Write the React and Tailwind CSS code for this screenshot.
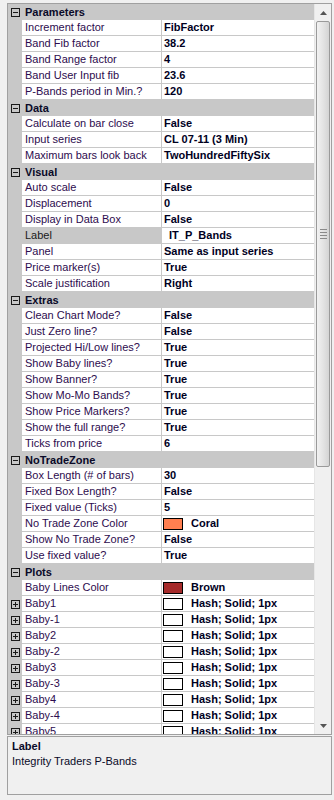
import React from "react";

const sections = [
  {
    title: "Parameters",
    rows: [
      { label: "Increment factor", value: "FibFactor" },
      { label: "Band Fib factor", value: "38.2" },
      { label: "Band Range factor", value: "4" },
      { label: "Band User Input fib", value: "23.6" },
      { label: "P-Bands period in Min.?", value: "120" },
    ],
  },
  {
    title: "Data",
    rows: [
      { label: "Calculate on bar close", value: "False" },
      { label: "Input series", value: "CL 07-11 (3 Min)" },
      { label: "Maximum bars look back", value: "TwoHundredFiftySix" },
    ],
  },
  {
    title: "Visual",
    rows: [
      { label: "Auto scale", value: "False" },
      { label: "Displacement", value: "0" },
      { label: "Display in Data Box", value: "False" },
      { label: "Label", value: "IT_P_Bands", selected: true },
      { label: "Panel", value: "Same as input series" },
      { label: "Price marker(s)", value: "True" },
      { label: "Scale justification", value: "Right" },
    ],
  },
  {
    title: "Extras",
    rows: [
      { label: "Clean Chart Mode?", value: "False" },
      { label: "Just Zero line?", value: "False" },
      { label: "Projected Hi/Low lines?", value: "True" },
      { label: "Show Baby lines?", value: "True" },
      { label: "Show Banner?", value: "True" },
      { label: "Show Mo-Mo Bands?", value: "True" },
      { label: "Show Price Markers?", value: "True" },
      { label: "Show the full range?", value: "True" },
      { label: "Ticks from price", value: "6" },
    ],
  },
  {
    title: "NoTradeZone",
    rows: [
      { label: "Box Length (# of bars)", value: "30" },
      { label: "Fixed Box Length?", value: "False" },
      { label: "Fixed value (Ticks)", value: "5" },
      { label: "No Trade Zone Color", value: "Coral", swatch: "#ff7f50" },
      { label: "Show No Trade Zone?", value: "False" },
      { label: "Use fixed value?", value: "True" },
    ],
  },
  {
    title: "Plots",
    rows: [
      { label: "Baby Lines Color", value: "Brown", swatch: "#a52a2a" },
      ...["Baby1", "Baby-1", "Baby2", "Baby-2", "Baby3", "Baby-3", "Baby4", "Baby-4", "Baby5"].map((b) => ({
        label: b,
        value: "Hash; Solid; 1px",
        swatch: "#ffffff",
        expand: true,
      })),
    ],
  },
];

// small +/- box drawn in the gutter
function ExpandBox({ minus }) {
  return (
    <svg width="9" height="9" viewBox="0 0 9 9" className="block">
      <rect x="0.5" y="0.5" width="8" height="8" fill="none" stroke="#1a1a1a" />
      <line x1="2" y1="4.5" x2="7" y2="4.5" stroke="#1a1a1a" />
      {!minus && <line x1="4.5" y1="2" x2="4.5" y2="7" stroke="#1a1a1a" />}
    </svg>
  );
}

function Header({ title }) {
  return (
    <div className="flex h-4 bg-[#c8c8c8] shrink-0">
      <div className="w-[14px] flex items-center justify-center">
        <ExpandBox minus />
      </div>
      <div className="pl-[3px] font-bold text-[#0a0a28] leading-4">{title}</div>
    </div>
  );
}

function Row({ label, value, swatch, expand, selected }) {
  return (
    <div className="flex h-4 shrink-0">
      <div className="w-[14px] bg-[#c8c8c8] flex items-center justify-center">
        {expand && <ExpandBox />}
      </div>
      <div
        className={`w-[140px] border-r border-b border-[#c8c8c8] pl-[3px] leading-[15px] whitespace-nowrap overflow-hidden ${
          selected ? "bg-[#c8c8c8] text-[#1a1a1a]" : "bg-white text-[#2d0c4e]"
        }`}
      >
        {label}
      </div>
      <div className="flex-1 flex items-center bg-white border-b border-[#c8c8c8] whitespace-nowrap overflow-hidden font-bold text-[#00001e]">
        {swatch ? (
          <>
            <span
              className="ml-px w-[20px] h-[12px] border border-black shrink-0"
              style={{ backgroundColor: swatch }}
            />
            <span className="pl-[8px] leading-[15px]">{value}</span>
          </>
        ) : (
          <span className={`${selected ? "pl-[7px]" : "pl-[2px]"} leading-[15px]`}>{value}</span>
        )}
      </div>
    </div>
  );
}

function Arrow({ up }) {
  return (
    <svg width="7" height="4" viewBox="0 0 7 4" className="block">
      <polygon points={up ? "0,4 7,4 3.5,0" : "0,0 7,0 3.5,4"} fill="#555" />
    </svg>
  );
}

function Scrollbar() {
  return (
    <div className="w-[17px] bg-[#f0f0f0] border-l border-[#e6e6e6] flex flex-col">
      <div className="h-[17px] flex items-center justify-center">
        <Arrow up />
      </div>
      <div className="mx-px h-[446px] rounded-[2px] border border-[#9a9a9a] bg-linear-to-r from-[#f2f2f2] via-[#e4e4e4] to-[#d4d4d4] flex flex-col items-center pt-[207px] gap-[2px]">
        <div className="w-[7px] h-px bg-[#8a8a8a]" />
        <div className="w-[7px] h-px bg-[#8a8a8a]" />
        <div className="w-[7px] h-px bg-[#8a8a8a]" />
        <div className="w-[7px] h-px bg-[#8a8a8a]" />
      </div>
      <div className="flex-1" />
      <div className="h-[17px] flex items-center justify-center">
        <Arrow />
      </div>
    </div>
  );
}

export default function App() {
  return (
    <div
      className="w-[334px] h-[800px] bg-[#f0f0f0] pt-[3px] overflow-hidden text-[11px]"
      style={{ fontFamily: '"Liberation Sans", Arial, sans-serif' }}
    >
      {/* Property grid */}
      <div className="ml-[7px] w-[325px] h-[732px] border border-[#a0a0a0] flex bg-white">
        <div className="flex-1 flex flex-col overflow-hidden">
          {sections.map((s) => (
            <React.Fragment key={s.title}>
              <Header title={s.title} />
              {s.rows.map((r) => (
                <Row key={r.label} {...r} />
              ))}
            </React.Fragment>
          ))}
        </div>
        <Scrollbar />
      </div>

      {/* Description panel */}
      <div className="ml-[7px] mt-px w-[325px] h-[59px] border border-[#a0a0a0] bg-[#f0f0f0] px-[4px] pt-[2px] text-[#0a0a28]">
        <div className="font-bold leading-[15px]">Label</div>
        <div className="leading-[15px]">Integrity Traders P-Bands</div>
      </div>
    </div>
  );
}
